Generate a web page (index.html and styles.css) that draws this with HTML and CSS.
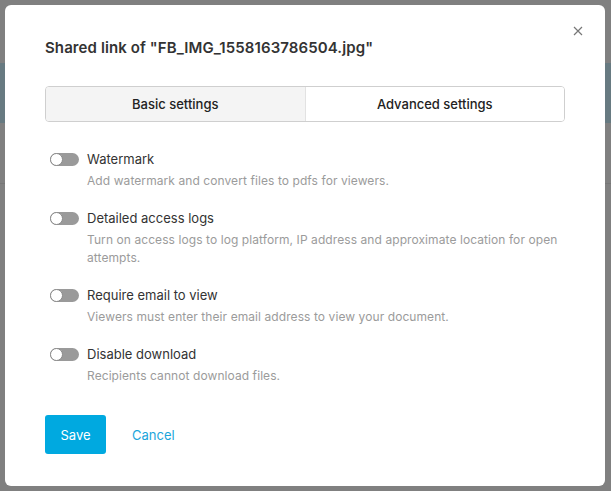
FILE: index.html
```html
<!DOCTYPE html>
<html>
<head>
<meta charset="utf-8">
<link rel="stylesheet" href="styles.css">
</head>
<body>
<div class="page">
  <div class="bg-top"></div>
  <div class="bg-band"></div>
  <div class="bg-mid"></div>
  <div class="bg-rest"></div>
</div>
<div class="modal">
  <button class="close" aria-label="Close">
    <svg width="10" height="10" viewBox="0 0 10 10"><path d="M1 1L9 9M9 1L1 9" stroke="#777" stroke-width="1.2" fill="none"/></svg>
  </button>
  <h1 class="title">Shared link of "FB_IMG_1558163786504.jpg"</h1>
  <div class="tabs">
    <div class="tab tab-inactive">Basic settings</div>
    <div class="tab tab-active">Advanced settings</div>
  </div>
  <div class="options">
    <div class="option">
      <div class="option-head"><span class="toggle"></span><span class="label">Watermark</span></div>
      <div class="desc">Add watermark and convert files to pdfs for viewers.</div>
    </div>
    <div class="option">
      <div class="option-head"><span class="toggle"></span><span class="label">Detailed access logs</span></div>
      <div class="desc">Turn on access logs to log platform, IP address and approximate location for open attempts.</div>
    </div>
    <div class="option">
      <div class="option-head"><span class="toggle"></span><span class="label">Require email to view</span></div>
      <div class="desc">Viewers must enter their email address to view your document.</div>
    </div>
    <div class="option">
      <div class="option-head"><span class="toggle"></span><span class="label">Disable download</span></div>
      <div class="desc">Recipients cannot download files.</div>
    </div>
  </div>
  <div class="actions">
    <button class="btn-save">Save</button>
    <button class="btn-cancel">Cancel</button>
  </div>
</div>
</body>
</html>
```
FILE: styles.css
```css
html, body {
  margin: 0;
  padding: 0;
  width: 611px;
  height: 491px;
  overflow: hidden;
  background: #808080;
  font-family: "Inter", "Liberation Sans", sans-serif;
}
.page {
  display: flex;
  flex-direction: column;
  height: 491px;
}
.bg-top { height: 63px; background: #808080; }
.bg-band { height: 60px; background: #677a81; }
.bg-mid { height: 60px; background: #808080; border-bottom: 1px solid #777; }
.bg-rest { flex: 1; background: #808080; }

.modal {
  position: absolute;
  left: 5px;
  top: 5px;
  width: 600px;
  height: 481px;
  box-sizing: border-box;
  background: #fff;
  border-radius: 6px;
  padding: 33px 40px 0 40px;
  display: flex;
  flex-direction: column;
}
.close {
  position: absolute;
  right: 21px;
  top: 20px;
  width: 12px;
  height: 12px;
  padding: 0;
  border: 0;
  background: none;
  display: flex;
  align-items: center;
  justify-content: center;
}
.title {
  margin: 0;
  font-size: 15px;
  line-height: 20px;
  font-weight: 600;
  letter-spacing: 0.1px;
  color: #333;
}
.tabs {
  margin-top: 28px;
  display: flex;
  height: 36px;
  box-sizing: border-box;
  border: 1px solid #cfcfcf;
  border-radius: 4px;
  overflow: hidden;
}
.tab {
  flex: 1;
  display: flex;
  align-items: center;
  justify-content: center;
  font-size: 13px;
  font-weight: 500;
  color: #222;
}
.tab-inactive { background: #f4f4f4; border-right: 1px solid #e2e2e2; }
.tab-active { background: #fff; }

.options {
  margin-top: 28px;
  padding-left: 5px;
  display: flex;
  flex-direction: column;
  gap: 19px;
}
.option-head {
  display: flex;
  align-items: center;
  height: 18px;
}
.toggle {
  position: relative;
  width: 29px;
  height: 13px;
  border-radius: 7px;
  background: #9a9a9a;
  margin-right: 8px;
}
.toggle::before {
  content: "";
  position: absolute;
  left: 0;
  top: 0;
  width: 13px;
  height: 13px;
  box-sizing: border-box;
  border-radius: 50%;
  background: #fff;
  border: 1px solid #8a8a8a;
}
.label {
  font-size: 13px;
  color: #333;
}
.desc {
  margin-top: 4px;
  padding-left: 37px;
  font-size: 12px;
  letter-spacing: 0.08px;
  line-height: 18px;
  color: #9b9b9b;
  max-width: 478px;
}
.actions {
  margin-top: 30px;
  display: flex;
  align-items: center;
}
.btn-save {
  width: 61px;
  height: 39px;
  border: 0;
  border-radius: 3px;
  background: #00a9e0;
  color: #fff;
  font-family: inherit;
  font-size: 13px;
  padding: 0;
}
.btn-cancel {
  margin-left: 26px;
  border: 0;
  background: none;
  padding: 0;
  color: #1ba5db;
  font-family: inherit;
  font-size: 13px;
}
```
